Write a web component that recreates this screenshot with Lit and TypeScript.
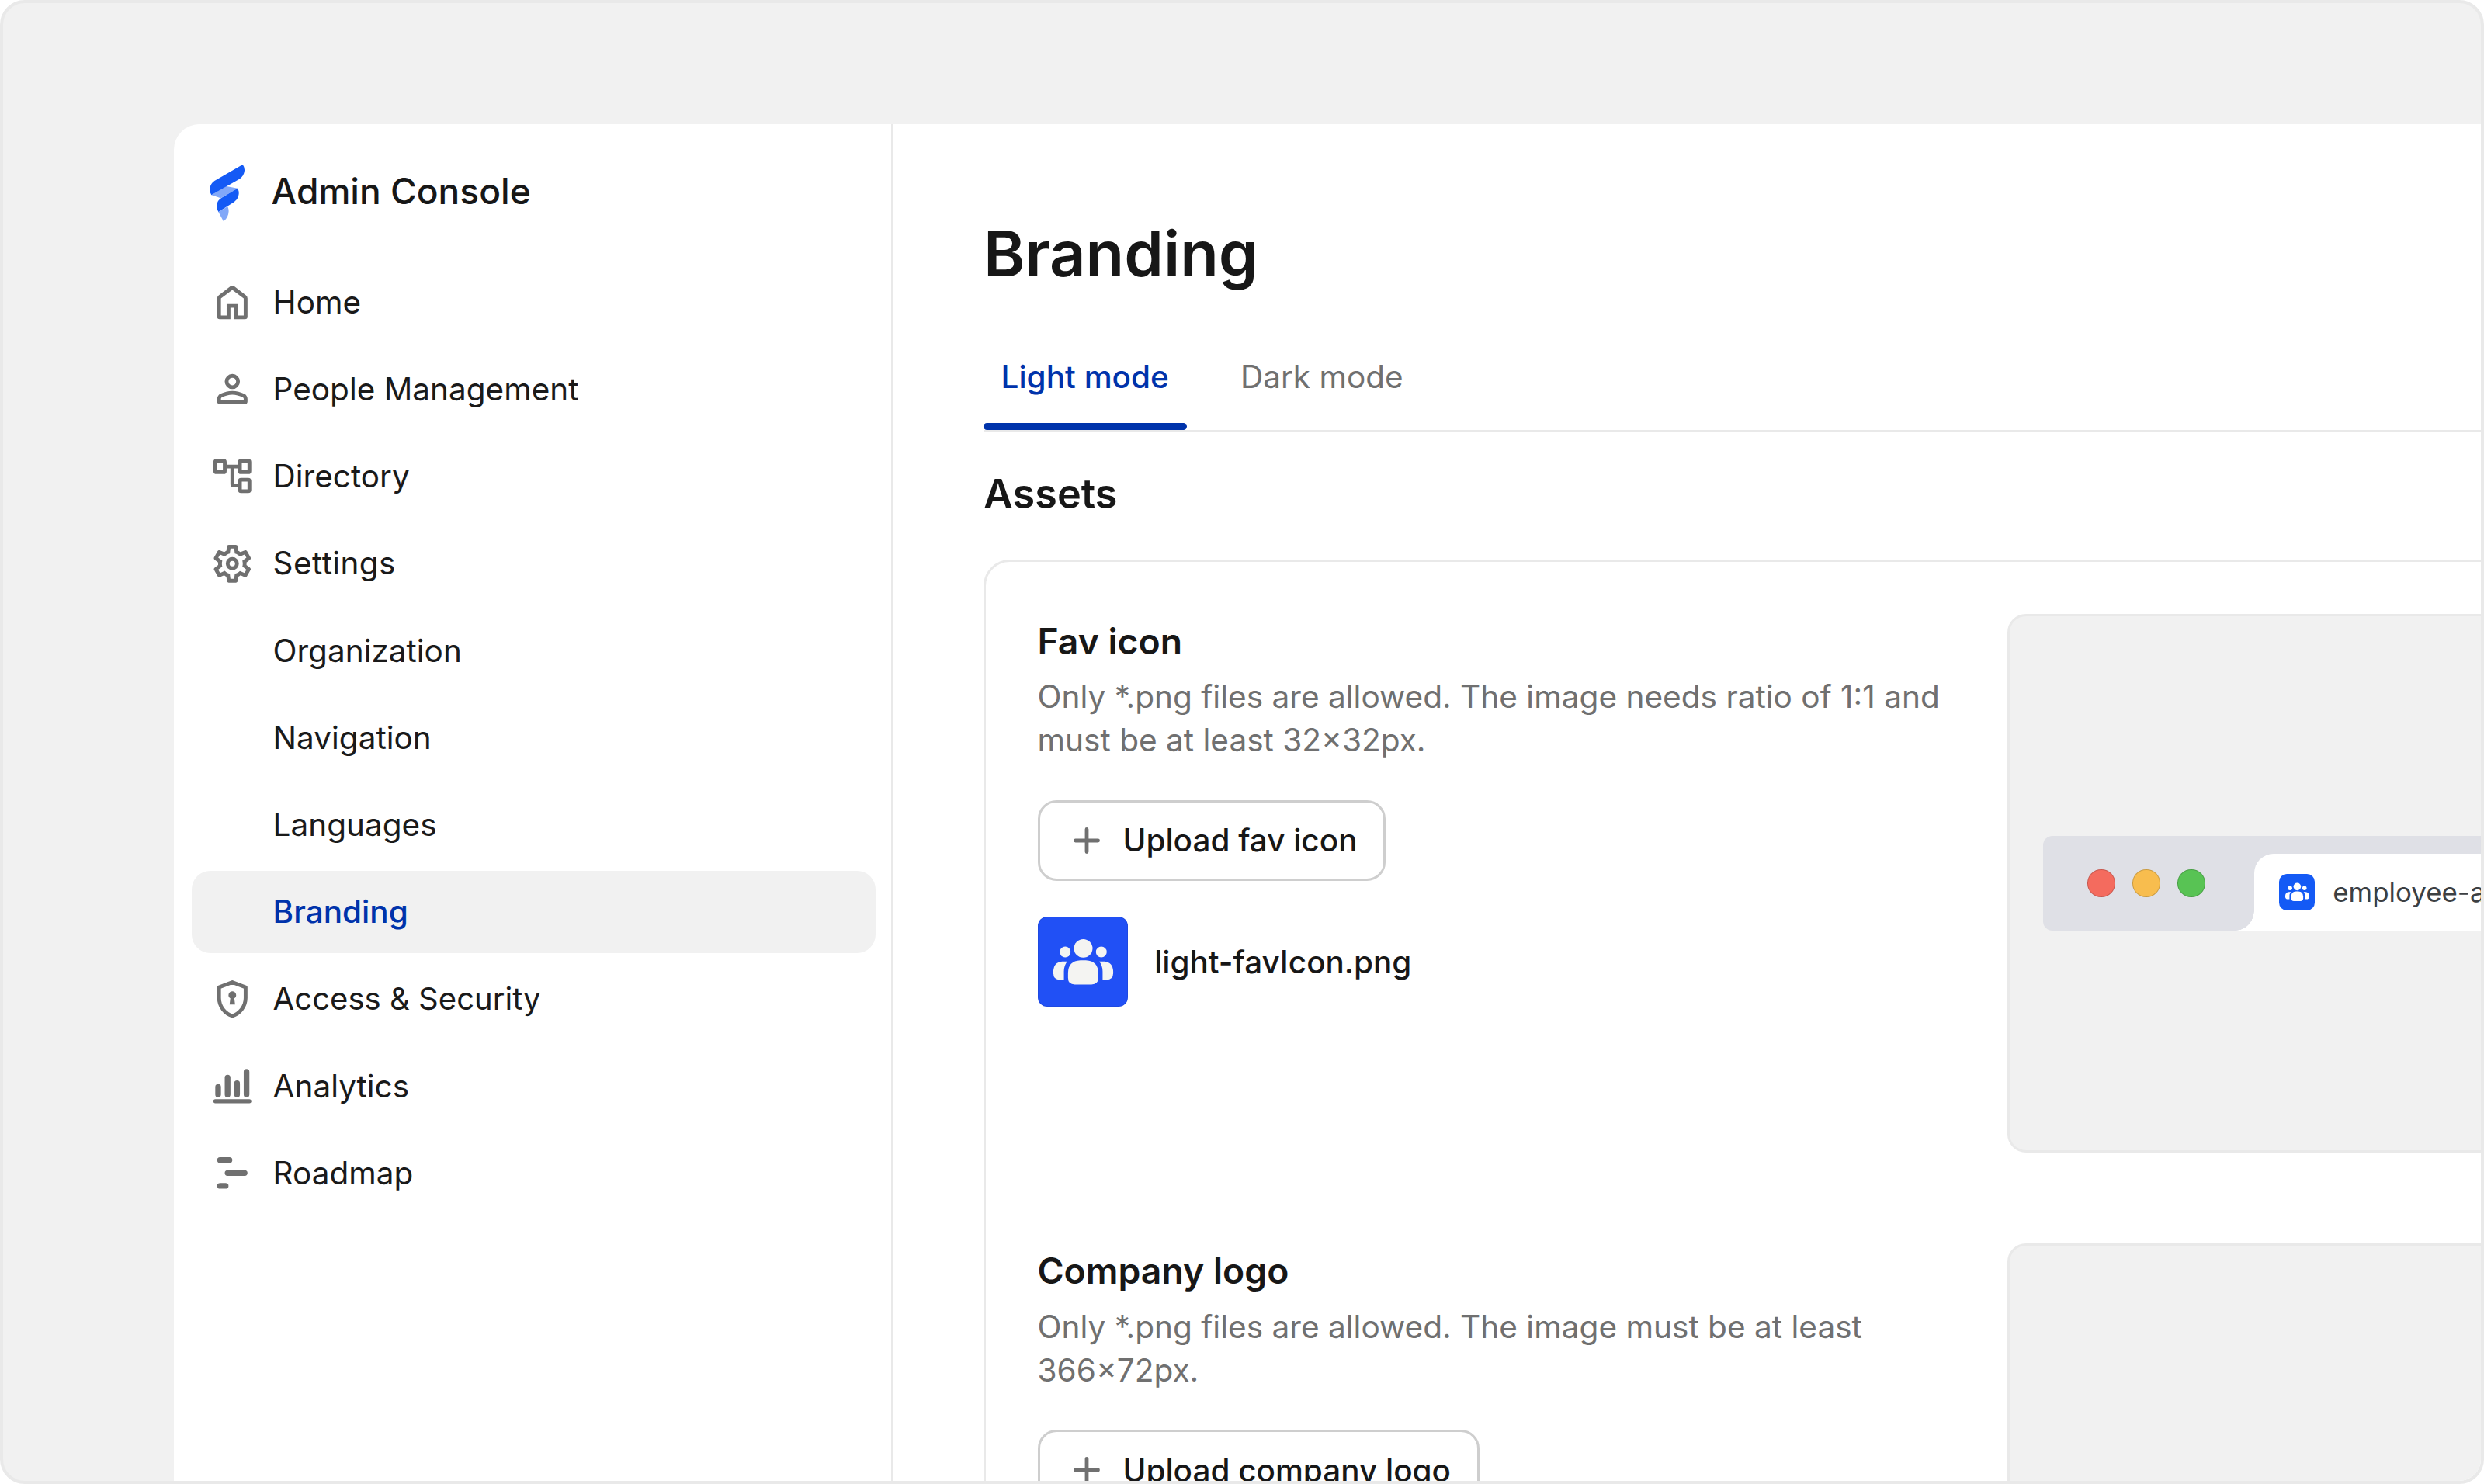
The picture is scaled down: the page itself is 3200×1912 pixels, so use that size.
import { LitElement, html, css, svg, nothing } from "lit";
import { customElement, property } from "lit/decorators.js";
import { classMap } from "lit/directives/class-map.js";

const icons = {
  home: svg`<path fill="currentColor" fill-rule="evenodd" d="M6 19h3v-6h6v6h3v-9l-6-4.5L6 10v9Zm-.7 2Q4 21 4 19.700V10q0-.95.8-1.6l6.100-4.700q1.100-.8 2.200 0l6.100 4.700q.8.65.8 1.6v9.700q0 1.300-1.300 1.300H13v-6h-2v6z"/>`,
  people: svg`<circle cx="12" cy="8" r="3" fill="none" stroke="currentColor" stroke-width="2"/>
    <path fill="currentColor" fill-rule="evenodd" d="M4 18v-.8q0-.85.438-1.562T5.600 14.550q1.550-.775 3.150-1.162T12 13t3.250.388T18.400 14.550q.725.375 1.163 1.088T20 17.200v1.300q0 1.500-1.500 1.500h-13Q4 20 4 18.500zM6 18h12v-.8q0-.275-.137-.5t-.363-.35q-1.350-.675-2.725-1.012T12 15t-2.775.338T6.500 16.350q-.225.125-.363.350T6 17.200z"/>`,
  directory: svg`<g fill="none" stroke="currentColor" stroke-width="2">
      <rect x="3" y="4" width="5" height="6" rx=".6"/><rect x="16" y="4" width="5" height="6" rx=".6"/>
      <rect x="16" y="14" width="5" height="6" rx=".6"/><path d="M9 7h6M12 7v9.400q0 .6.6.6H15"/></g>`,
  settings: svg`<path fill="currentColor" fill-rule="evenodd" d="M13.875 22h-3.750q-.375 0-.65-.25t-.325-.625l-.3-2.325q-.325-.125-.612-.3t-.563-.375l-2.175.9q-.35.125-.7.025t-.55-.425L2.400 15.400q-.2-.325-.125-.7t.375-.6l1.875-1.425Q4.500 12.500 4.500 12.337v-.675q0-.162.025-.337L2.650 9.900q-.3-.225-.375-.6t.125-.7l1.850-3.225q.175-.35.537-.438t.713.038l2.175.9q.275-.2.575-.375t.6-.3l.3-2.325q.05-.375.325-.625t.65-.25h3.750q.375 0 .65.25t.325.625l.3 2.325q.325.125.613.3t.562.375l2.175-.9q.35-.125.7-.025t.55.425L21.600 8.600q.2.325.125.7t-.375.6l-1.875 1.425q.025.175.025.338v.674q0 .163-.05.338l1.875 1.425q.3.225.375.6t-.125.7l-1.850 3.200q-.2.325-.563.438t-.712-.013l-2.125-.9q-.275.2-.575.375t-.6.3l-.3 2.325q-.05.375-.325.625t-.65.25M11 20h1.975l.35-2.650q.775-.2 1.438-.587t1.212-.938l2.475 1.025.975-1.700-2.150-1.625q.125-.35.175-.737T17.500 12t-.05-.787-.175-.738l2.150-1.625-.975-1.700-2.475 1.050q-.55-.575-1.212-.962t-1.438-.588L13 4h-1.975l-.35 2.650q-.775.2-1.437.588t-1.213.937L5.550 7.150l-.975 1.700 2.150 1.600q-.125.375-.175.750t-.05.8q0 .4.05.775t.175.750l-2.150 1.625.975 1.700 2.475-1.050q.55.575 1.213.963t1.437.587z"/>
    <circle cx="12" cy="12" r="2.450" fill="none" stroke="currentColor" stroke-width="2"/>`,
  security: svg`<path fill="none" stroke="currentColor" stroke-width="2" stroke-linejoin="round" d="M12 3.100 19 5.700V11.400C19 16.200 15.600 19.800 12 20.900 8.400 19.800 5 16.200 5 11.400V5.700z"/>
    <path fill="currentColor" d="M12 7.900a2 2 0 0 1 1.050 3.700l.4 3.200h-2.900l.4-3.200A2 2 0 0 1 12 7.900z"/>`,
  analytics: svg`<g stroke="currentColor" stroke-linecap="round"><path stroke-width="3" d="M4.500 12.500v4M9.500 7.500v9M14.500 10.500v6M19.500 4.500v12"/><path stroke-width="2.100" d="M3 20h18"/></g>`,
  roadmap: svg`<path stroke="currentColor" stroke-width="3" stroke-linecap="round" d="M5.500 5.200h5M9.500 12h9M5.500 18.800h3"/>`,
};

const NAV: { label: string; icon?: keyof typeof icons; active?: boolean }[] = [
  { label: "Home", icon: "home" },
  { label: "People Management", icon: "people" },
  { label: "Directory", icon: "directory" },
  { label: "Settings", icon: "settings" },
  { label: "Organization" },
  { label: "Navigation" },
  { label: "Languages" },
  { label: "Branding", active: true },
  { label: "Access & Security", icon: "security" },
  { label: "Analytics", icon: "analytics" },
  { label: "Roadmap", icon: "roadmap" },
];

/** Rounded badge with the three-person glyph. */
@customElement("team-badge")
export class TeamBadge extends LitElement {
  static styles = css`
    :host { display: block; flex: none; overflow: hidden; }
    svg { display: block; width: 100%; height: 100%; }
  `;
  render() {
    return html`<svg viewBox="18 33 351 351" fill="currentColor">
      <circle cx="194" cy="156" r="36" /><circle cx="124" cy="170" r="21" /><circle cx="264" cy="170" r="21" />
      <path d="M183 202H204Q252 204 252 252V270Q252 296 226 296H161Q135 296 135 270V252Q135 204 183 202z" />
      <path d="M132 207Q119 222 119 246V278H104Q78 278 78 252V246Q79 210 112 207z" />
      <path d="M256 207Q269 222 269 246V278H284Q310 278 310 252V246Q309 210 276 207z" />
    </svg>`;
  }
}

@customElement("side-nav")
export class SideNav extends LitElement {
  static styles = css`
    :host { display: block; flex: none; box-sizing: border-box; width: 927px; padding: 0 20px 0 23px; border-right: 3px solid #e9e9e9; }
    .brand { display: flex; align-items: flex-start; gap: 34.300px; box-sizing: border-box; height: 176px; padding: 51.700px 0 0 23px; }
    .logo { flex: none; width: 45.300px; height: 73.300px; }
    .product { margin-top: 4.300px; font-size: 46.100px; line-height: 60px; font-weight: 500; color: #171717; }
    .list { display: flex; flex-direction: column; gap: 5.840px; }
    .item { display: flex; align-items: center; gap: 22.800px; box-sizing: border-box; height: 106.400px; padding-left: 23.200px; border-radius: 24px; font-size: 40.500px; color: #1a1a1a; white-space: nowrap; }
    .item.active { background: #f1f1f1; color: #0033ab; font-weight: 500; }
    .slot { flex: none; width: 58.600px; height: 58.600px; color: #707070; }
    .slot svg { display: block; width: 100%; height: 100%; }
    .label.tight { font-size: 40.100px; }
    .label.loose { letter-spacing: 0.4px; }
  `;
  render() {
    return html`
      <div class="brand">
        <svg class="logo" viewBox="45 35 136 220">
          <path fill="#82a8f8" d="M52 153 110 119 154 127 88 165zM79 218 115 197Q119 206 119 215 118 240 99 255z" />
          <path fill="#145af5" d="M173 35Q181 45 180 59 178 80 160 91L52 153Q45 142 46 129 48 108 64 98zM153 127Q159 136 158 149 156 169 140 180L79 218Q72 208 72 194 74 173 92 163z" />
        </svg>
        <div class="product">Admin Console</div>
      </div>
      <nav class="list">
        ${NAV.map(
          (n) => html`<div class=${classMap({ item: true, active: !!n.active })}>
            <span class="slot">${n.icon ? html`<svg viewBox="0 0 24 24">${icons[n.icon]}</svg>` : nothing}</span>
            <span class=${classMap({ label: true, tight: n.icon === "security", loose: n.icon === "settings" })}>${n.label}</span>
          </div>`
        )}
      </nav>
    `;
  }
}

@customElement("asset-row")
export class AssetRow extends LitElement {
  @property() heading = "";
  @property() hint = "";
  @property() action = "";
  @property() file = "";
  static styles = css`
    :host { display: grid; grid-template-columns: 1249px 900px; height: 694.700px; }
    .info { display: flex; flex-direction: column; align-items: flex-start; padding-top: 5px; }
    .heading { font-size: 46.300px; line-height: 60px; font-weight: 600; color: #171717; }
    .hint { margin-top: 14.400px; width: 1180px; font-size: 40.600px; line-height: 56.200px; color: #707070; }
    .button { display: flex; align-items: center; gap: 18px; box-sizing: border-box; height: 104px; margin-top: 48.300px; padding: 0 34px 0 31px; border: 3px solid #cecece; border-radius: 24px; font-size: 40.450px; font-weight: 500; color: #171717; white-space: nowrap; }
    .plus { width: 58px; height: 58px; color: #707070; }
    .file { display: flex; align-items: center; gap: 34px; margin-top: 46px; font-size: 40.400px; font-weight: 500; color: #171717; }
    .thumb { width: 116.700px; height: 116.700px; border-radius: 12px; background: #2150f5; color: #f4f4f2; box-shadow: inset 0 0 0 1px rgba(0, 0, 0, 0.08); }
    .preview { display: flex; align-items: center; box-sizing: border-box; padding-left: 43.200px; border: 3px solid #e9e9e9; border-radius: 24px; background: #f1f1f1; }
    .strip { display: flex; align-items: center; flex: 1; height: 121.700px; padding-left: 57.600px; border-radius: 12px 0 0 12px; background: #dfe0e6; }
    .lights { display: flex; gap: 22.500px; }
    .light { box-sizing: border-box; width: 35.500px; height: 35.500px; border-radius: 50%; border: 1px solid rgba(0, 0, 0, 0.18); }
    .red { background: #f46b5e; }
    .amber { background: #f8bd4e; }
    .green { background: #58c354; }
    .tab { position: relative; display: flex; align-items: center; align-self: flex-end; flex: 1; gap: 22.800px; height: 98.700px; margin-left: 63px; padding-left: 32px; border-top-left-radius: 25px; background: #fff; font-size: 34.900px; color: #3c4043; }
    .tab::before { content: ""; position: absolute; right: 100%; bottom: 0; width: 24px; height: 26px; background: radial-gradient(ellipse 24px 26px at 0 0, transparent 98%, #fff 100%); }
    .fav { width: 46.700px; height: 46.700px; border-radius: 10px; background: #145af5; color: #fff; }
  `;
  render() {
    return html`
      <div class="info">
        <div class="heading">${this.heading}</div>
        <div class="hint">${this.hint}</div>
        <div class="button">
          <svg class="plus" viewBox="0 0 58 58"><path d="M14.500 29h29M29 14.500v29" stroke="currentColor" stroke-width="4.800" stroke-linecap="round" /></svg>
          <span>${this.action}</span>
        </div>
        ${this.file ? html`<div class="file"><team-badge class="thumb"></team-badge><span>${this.file}</span></div>` : nothing}
      </div>
      <div class="preview">
        ${this.file
          ? html`<div class="strip">
              <div class="lights"><span class="light red"></span><span class="light amber"></span><span class="light green"></span></div>
              <div class="tab"><team-badge class="fav"></team-badge><span>employee-app</span></div>
            </div>`
          : nothing}
      </div>
    `;
  }
}

@customElement("app-root")
export class AppRoot extends LitElement {
  static styles = css`
    :host { display: block; font-family: Inter, "Liberation Sans", sans-serif; background: #fff; }
    .frame { box-sizing: border-box; width: 3200px; height: 1912px; padding: 156px 0 0 220px; border: 4px solid #e9e9e9; border-radius: 32px; background: #f1f1f1; overflow: hidden; }
    .window { display: flex; width: 3400px; height: 1900px; border-top-left-radius: 33px; background: #fff; }
    .main { flex: 1; padding: 116.500px 0 0 116px; }
    .title { font-size: 81.200px; line-height: 100px; font-weight: 600; color: #171717; }
    .tabs { display: flex; gap: 46.800px; margin-top: 81.600px; border-bottom: 3px solid #e9e9e9; }
    .tab { box-sizing: border-box; width: 261.700px; height: 96px; padding-left: 22.500px; font-size: 40.500px; line-height: 56px; color: #707070; border-bottom: 9px solid transparent; white-space: nowrap; }
    .tab.current { color: #0033ab; font-weight: 500; border: 0; display: flex; flex-direction: column; padding: 0; }
    .tab.current .text { flex: 1; padding-left: 22.500px; }
    .bar { height: 9px; border-radius: 4.500px; background: #0033ab; }
    .section { margin-top: 47px; font-size: 52.200px; line-height: 64px; font-weight: 600; color: #171717; }
    .card { display: flex; flex-direction: column; gap: 117px; margin-top: 53px; padding: 66.500px 0 66px 66.500px; border: 3px solid #e9e9e9; border-radius: 34px; }
  `;
  render() {
    return html`
      <div class="frame">
        <div class="window">
          <side-nav></side-nav>
          <main class="main">
            <div class="title">Branding</div>
            <div class="tabs">
              <div class="tab current"><span class="text">Light mode</span><span class="bar"></span></div>
              <div class="tab">Dark mode</div>
            </div>
            <div class="section">Assets</div>
            <div class="card">
              <asset-row heading="Fav icon" hint="Only *.png files are allowed. The image needs ratio of 1:1 and must be at least 32×32px." action="Upload fav icon" file="light-favIcon.png"></asset-row>
              <asset-row heading="Company logo" hint="Only *.png files are allowed. The image must be at least 366×72px." action="Upload company logo"></asset-row>
            </div>
          </main>
        </div>
      </div>
    `;
  }
}
